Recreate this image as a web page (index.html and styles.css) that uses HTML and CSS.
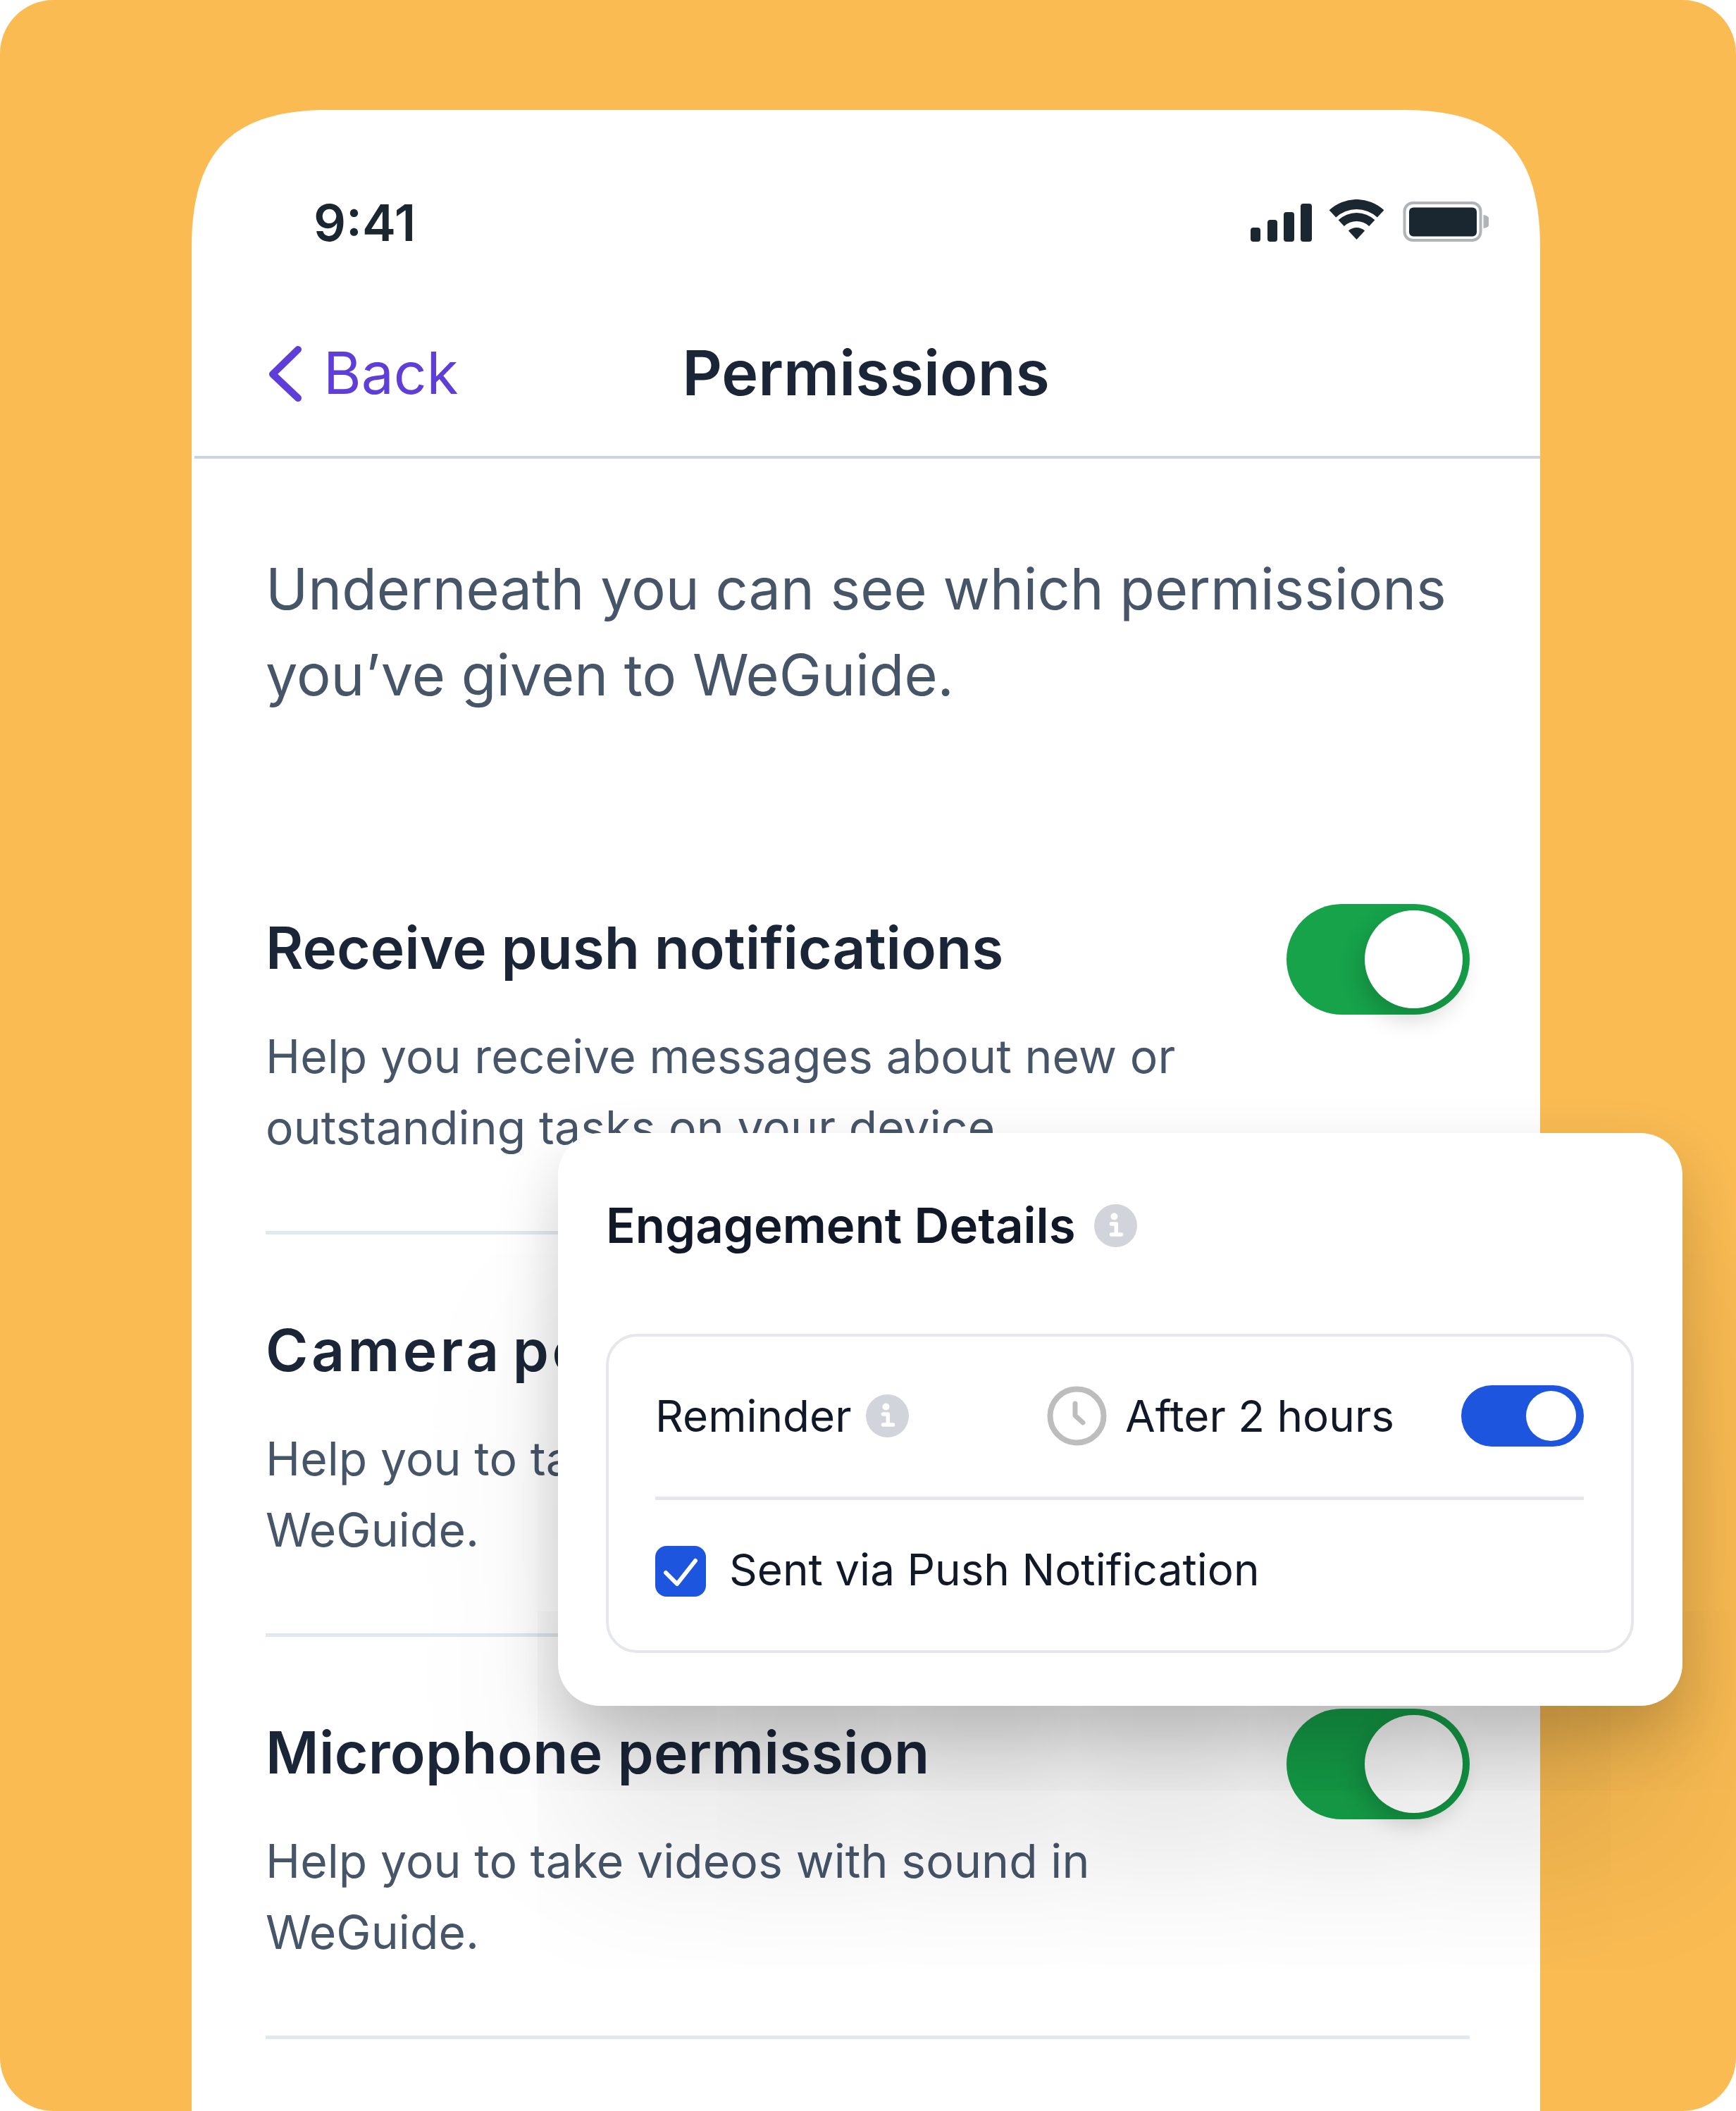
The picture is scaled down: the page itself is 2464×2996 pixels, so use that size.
FILE: index.html
```html
<!DOCTYPE html>
<html lang="en">
<head>
<meta charset="utf-8">
<title>Permissions</title>
<link rel="stylesheet" href="styles.css">
</head>
<body>
<main class="canvas">
  <section class="phone">
    <div class="status">
      <span class="time">9:41</span>
      <svg class="status-icons" width="338" height="66" viewBox="0 0 338 66">
        <g fill="#1B2730">
          <rect x="0" y="40" width="14" height="20" rx="4"/>
          <rect x="24" y="29" width="14" height="31" rx="4"/>
          <rect x="47" y="18" width="15" height="42" rx="4"/>
          <rect x="71" y="6" width="16" height="54" rx="4"/>
          <g transform="translate(112 0)">
            <path d="M-.4 15.3A57 57 0 0 1 77.4 15.3L67.8 25.6A43 43 0 0 0 9.2 25.6Z"/>
            <path d="M12.6 29.2A38 38 0 0 1 64.4 29.2L56.2 38A26 26 0 0 0 20.8 38Z"/>
            <path d="M26.9 44.6A17 17 0 0 1 50.1 44.6L38.5 57Z"/>
          </g>
          <rect x="225" y="11.5" width="96" height="41" rx="6"/>
        </g>
        <rect x="218.5" y="5" width="108" height="53" rx="12" fill="none" stroke="#B0B4B8" stroke-width="4"/>
        <path d="M330.500 22A9.500 9.500 0 0 1 330.500 41Z" fill="#B0B4B8"/>
      </svg>
    </div>
    <nav class="nav">
      <a class="back">
        <svg width="48" height="81" viewBox="0 0 48 81"><path d="M42 6L6 41L42 75" fill="none" stroke="#5F3DD9" stroke-width="10" stroke-linecap="round" stroke-linejoin="round"/></svg>
        <span>Back</span>
      </a>
      <h1 class="nav-title">Permissions</h1>
      <span></span>
    </nav>
    <div class="content">
      <p class="intro">Underneath you can see which permissions you’ve given to WeGuide.</p>
      <article class="perm">
        <div class="perm-text">
          <h2>Receive push notifications</h2>
          <p>Help you receive messages about new or outstanding tasks on your device</p>
        </div>
        <div class="switch-green"><i></i></div>
      </article>
      <article class="perm perm-camera">
        <div class="perm-text">
          <h2>Camera permission</h2>
          <p>Help you to take photos with your camera in WeGuide.</p>
        </div>
        <div class="switch-green"><i></i></div>
      </article>
      <article class="perm perm-mic">
        <div class="perm-text">
          <h2>Microphone permission</h2>
          <p>Help you to take videos with sound in WeGuide.</p>
        </div>
        <div class="switch-green"><i></i></div>
      </article>
    </div>
  </section>

  <aside class="popup">
    <header class="popup-head">
      <h3>Engagement Details</h3>
      <svg class="info" width="61" height="61" viewBox="0 0 61 61"><circle cx="30.500" cy="30.500" r="30.500" fill="#D1D5DB"/><circle cx="28.500" cy="17.500" r="5" fill="#fff"/><path d="M24.500 28H31.300V43M24.500 43H38.500" fill="none" stroke="#fff" stroke-width="5.500" stroke-linecap="round" stroke-linejoin="round"/></svg>
    </header>
    <div class="box">
      <div class="box-row">
        <div class="group-left">
          <span>Reminder</span>
          <svg class="info" width="61" height="61" viewBox="0 0 61 61"><circle cx="30.500" cy="30.500" r="30.500" fill="#D1D5DB"/><circle cx="28.500" cy="17.500" r="5" fill="#fff"/><path d="M24.500 28H31.300V43M24.500 43H38.500" fill="none" stroke="#fff" stroke-width="5.500" stroke-linecap="round" stroke-linejoin="round"/></svg>
        </div>
        <div class="group-right">
          <svg class="clock" width="85" height="85" viewBox="0 0 85 85"><circle cx="42.500" cy="42.500" r="38" fill="none" stroke="#BDBDBD" stroke-width="8"/><path d="M40 25V42L51 52" fill="none" stroke="#BDBDBD" stroke-width="7" stroke-linecap="round" stroke-linejoin="round"/></svg>
          <span class="after">After 2 hours</span>
          <div class="switch-blue"><i></i></div>
        </div>
      </div>
      <div class="box-divider"></div>
      <div class="box-check">
        <svg class="check" width="72" height="72" viewBox="0 0 72 72"><rect width="72" height="72" rx="16" fill="#1D55DF"/><path d="M15 38L31 54L57 21" fill="none" stroke="#fff" stroke-width="6" stroke-linecap="round" stroke-linejoin="round"/></svg>
        <span class="check-label">Sent via Push Notification</span>
      </div>
    </div>
  </aside>
</main>
</body>
</html>
```
FILE: styles.css
```css
* { box-sizing: border-box; }
html, body { margin: 0; padding: 0; background: #fff; }
body { font-family: Inter, "Liberation Sans", sans-serif; }
h1, h2, h3, p { margin: 0; }

.canvas {
  position: relative;
  width: 2464px;
  height: 2996px;
  padding: 156px 278px 0 272px;
  background: #F9BB52;
  border-radius: 76px;
  overflow: hidden;
}

.phone {
  width: 1914px;
  height: 2840px;
  background: #fff;
  clip-path: path("M0 195C0 58 58 0 195 0H1719C1856 0 1914 58 1914 195V2840H0Z");
  overflow: hidden;
}

.status {
  display: flex;
  justify-content: space-between;
  align-items: center;
  height: 80px;
  margin-top: 120px;
  padding: 0 73px 0 173px;
}
.time { font-size: 72px; line-height: 80px; font-weight: 600; color: #1B2730; }
.status-icons { display: block; }

.nav {
  display: grid;
  grid-template-columns: 1fr auto 1fr;
  align-items: center;
  margin-left: 4px;
  padding: 122px 109px 67px 105px;
  border-bottom: 4px solid #CBD5E1;
}
.back { display: flex; align-items: center; gap: 30px; padding-top: 2px; font-size: 82px; line-height: 100px; color: #5F3DD9; }
.back svg { display: block; }
.nav-title { font-size: 88px; line-height: 100px; font-weight: 600; color: #1A2638; }

.content { padding: 124px 100px 0 105px; }
.intro { font-size: 81px; line-height: 122px; color: #475569; margin-bottom: 162px; width: 1750px; }

.perm {
  display: flex;
  justify-content: space-between;
  align-items: flex-start;
  height: 571px;
  padding-top: 102px;
  border-bottom: 5px solid #E2E8F0;
}
.perm h2 { margin-top: -2px; font-size: 82px; line-height: 130px; font-weight: 600; color: #1A2638; }
.perm-camera h2 { letter-spacing: 4.5px; word-spacing: -10px; }
.perm-mic h2 { letter-spacing: .3px; }
.perm p { margin-top: 38px; width: 1400px; font-size: 66px; line-height: 101px; letter-spacing: .1px; color: #475569; }

.switch-green {
  display: flex;
  justify-content: flex-end;
  align-items: center;
  flex: none;
  width: 260px;
  height: 157px;
  padding-right: 10px;
  border-radius: 79px;
  background: #16A34A;
}
.switch-green i {
  display: block;
  width: 139px;
  height: 139px;
  border-radius: 50%;
  background: #fff;
  box-shadow: -4px 14px 34px rgba(0, 0, 0, .18);
}

.popup {
  position: absolute;
  left: 792px;
  top: 1608px;
  width: 1596px;
  height: 813px;
  padding: 101px 69px 0 68px;
  background: #fff;
  border-radius: 60px;
  box-shadow: 0 40px 90px rgba(0, 0, 0, .19), 0 210px 250px -40px rgba(0, 0, 0, .16);
}
.popup-head { display: flex; align-items: center; gap: 26px; height: 61px; margin-bottom: 123px; }
.popup-head h3 { font-size: 69px; line-height: 61px; font-weight: 600; color: #111827; }
.info { display: block; flex: none; }

.box {
  height: 453px;
  padding: 69px 67px 0 66px;
  border: 4px solid #E5E7EB;
  border-radius: 44px;
  font-size: 62px;
  color: #111827;
}
.box-row { display: flex; justify-content: space-between; align-items: center; height: 87px; }
.group-left { display: flex; align-items: center; gap: 20px; }
.group-right { display: flex; align-items: center; }
.clock { display: block; margin-right: 26px; }
.after { margin-right: 95px; }
.switch-blue {
  display: flex;
  justify-content: flex-end;
  align-items: center;
  width: 174px;
  height: 87px;
  padding-right: 11px;
  border-radius: 44px;
  background: #1D55DF;
}
.switch-blue i { display: block; width: 71px; height: 71px; border-radius: 50%; background: #fff; }
.box-divider { height: 5px; margin: 71px 0 65px; background: #E5E7EB; }
.box-check { display: flex; align-items: center; gap: 33px; height: 72px; }
.check-label { margin-bottom: 4px; line-height: 72px; }
.check { display: block; flex: none; }
```
